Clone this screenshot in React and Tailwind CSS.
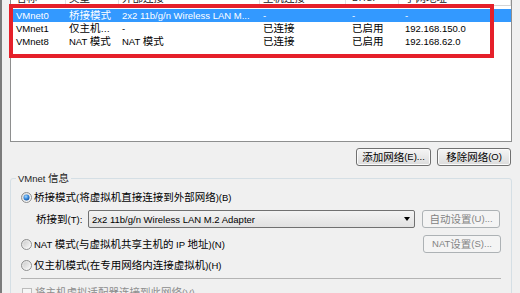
import React from 'react'

const CJK = /([\u2e80-\u9fff\uff00-\uffef]+)/

// CJK runs are drawn a little larger than the latin text, like the Windows dialog font
function Txt({ children }) {
  return String(children)
    .split(CJK)
    .map((p, i) => (i % 2 === 1 ? <span key={i} className="text-[10.5px]">{p}</span> : p))
}

const widths = ['w-[53px]', 'w-[53px]', 'w-[141px]', 'w-[86px]', 'w-[53px]', 'flex-1']
const pads = ['pl-[3px]', 'pl-[3px]', 'pl-[3px]', 'pl-[3px]', 'pl-[6px]', 'pl-[6px]']

const header = ['名称', '类型', '外部连接', '主机连接', 'DHCP', '子网地址']

const networks = [
  ['VMnet0', '桥接模式', '2x2 11b/g/n Wireless LAN M...', '-', '-', '-'],
  ['VMnet1', '仅主机…', '-', '已连接', '已启用', '192.168.150.0'],
  ['VMnet8', 'NAT 模式', 'NAT 模式', '已连接', '已启用', '192.168.62.0'],
]

function Radio({ checked }) {
  return (
    <svg width="11" height="11" viewBox="0 0 11 11" className="shrink-0">
      <defs>
        <linearGradient id="ring" x1="0" y1="0" x2="1" y2="1">
          <stop offset="0" stopColor="#d9d9d9" />
          <stop offset="1" stopColor="#ffffff" />
        </linearGradient>
        <radialGradient id="dot" cx="0.4" cy="0.35" r="0.7">
          <stop offset="0" stopColor="#a9dbff" />
          <stop offset="0.5" stopColor="#3f8fe0" />
          <stop offset="1" stopColor="#0d4f9e" />
        </radialGradient>
        <linearGradient id="off" x1="0" y1="0" x2="1" y2="1">
          <stop offset="0" stopColor="#cfcfcf" />
          <stop offset="1" stopColor="#f4f4f4" />
        </linearGradient>
      </defs>
      <circle cx="5.5" cy="5.5" r="5" fill="url(#ring)" stroke="#8e8f8f" strokeWidth="1" />
      {checked ? (
        <circle cx="5.5" cy="5.5" r="3" fill="url(#dot)" />
      ) : (
        <circle cx="5.5" cy="5.5" r="3.2" fill="url(#off)" />
      )}
    </svg>
  )
}

function Button({ children, disabled, className = '' }) {
  return (
    <div
      className={
        'flex items-center justify-center rounded-[3px] border leading-[16px] ' +
        (disabled
          ? 'border-[#adb2b5] bg-[#f4f4f4] text-[#838383] '
          : 'border-[#707070] bg-linear-to-b from-[#f5f5f5] to-[#dcdcdc] shadow-[inset_0_0_0_1px_#fbfbfb] ') +
        className
      }
    >
      <Txt>{children}</Txt>
    </div>
  )
}

export default function App() {
  return (
    <div className="relative h-[293px] w-[520px] overflow-hidden border-l-2 border-[#7b7b7b] bg-[#f0f0f0] font-['Liberation_Sans','Noto_Sans_CJK_SC',sans-serif] text-[9.5px] text-black">
      {/* network list */}
      <div className="ml-[8px] h-[142px] w-[502px] border-x border-b border-[#8e8f8f] bg-white">
        <div className="ml-[2px] flex h-[6px] overflow-hidden border-b border-[#d5d5d5] text-[#222]">
          {header.map((h, i) => (
            <div key={i} className={`${widths[i]} ${pads[i]} border-r border-[#e2e2e2]`}>
              <div className="-mt-[8px] leading-[12px] whitespace-nowrap">
                <Txt>{h}</Txt>
              </div>
            </div>
          ))}
        </div>
        <div className="mt-[3px] ml-[2px]">
          {networks.map((row, r) => (
            <div
              key={r}
              className={`flex h-[13px] items-center leading-[13px] whitespace-nowrap ${
                r === 0 ? 'bg-[#3399ff] text-white' : ''
              }`}
            >
              {row.map((c, i) => (
                <div key={i} className={`${widths[i]} ${pads[i]} overflow-hidden`}>
                  <Txt>{c}</Txt>
                </div>
              ))}
            </div>
          ))}
        </div>
      </div>

      {/* list buttons */}
      <div className="mt-[6px] ml-[8px] flex h-[18px] w-[502px] justify-end gap-[6px] pr-[1px]">
        <Button className="w-[75px]">添加网络(E)...</Button>
        <Button className="w-[74px]">移除网络(O)</Button>
      </div>

      {/* VMnet info group */}
      <fieldset className="mt-[6px] ml-[8px] w-[502px] rounded-[3px] border border-[#d5dfe5] pb-[20px]">
        <legend className="ml-[5px] px-[2px] leading-[12px] text-[#1e1e1e]">
          <Txt>VMnet 信息</Txt>
        </legend>

        <div className="mt-[6px] flex h-[13px] items-center gap-[2px] pl-[10px] leading-[13px]">
          <Radio checked />
          <span>
            <Txt>桥接模式(将虚拟机直接连接到外部网络)(B)</Txt>
          </span>
        </div>

        <div className="mt-[6px] flex h-[18px] items-center pl-[25px] leading-[13px]">
          <span className="w-[52px]">
            <Txt>桥接到(T):</Txt>
          </span>
          <div className="flex h-full w-[327px] items-center rounded-[2px] border border-[#707070] bg-linear-to-b from-[#f3f3f3] to-[#e1e1e1] pl-[3px] pr-[4px]">
            <span>2x2 11b/g/n Wireless LAN M.2 Adapter</span>
            <span className="ml-auto h-0 w-0 border-x-[3px] border-t-[4px] border-x-transparent border-t-black" />
          </div>
          <Button disabled className="ml-[7px] h-full w-[78px]">
            自动设置(U)...
          </Button>
        </div>

        <div className="mt-[7px] flex h-[18px] items-center pr-[10px] pl-[10px] leading-[13px]">
          <Radio />
          <span className="ml-[2px]">
            <Txt>NAT 模式(与虚拟机共享主机的 IP 地址)(N)</Txt>
          </span>
          <Button disabled className="ml-auto h-full w-[78px]">
            NAT 设置(S)...
          </Button>
        </div>

        <div className="mt-[6px] flex h-[13px] items-center gap-[2px] pl-[10px] leading-[13px]">
          <Radio />
          <span>
            <Txt>仅主机模式(在专用网络内连接虚拟机)(H)</Txt>
          </span>
        </div>

        <div className="mt-[6px] mr-[10px] ml-[10px] h-px bg-[#b4b4b4]" />

        <div className="mt-[7px] flex h-[13px] items-center gap-[3px] pl-[11px] leading-[13px] text-[#8d8d8d]">
          <span className="h-[10px] w-[10px] shrink-0 border border-[#bcbcbc] bg-[#f6f6f6]" />
          <span>
            <Txt>将主机虚拟适配器连接到此网络(V)</Txt>
          </span>
        </div>
      </fieldset>

      {/* annotation frame drawn over the list */}
      <div className="absolute top-[4px] left-[7px] h-[54px] w-[485px] border-4 border-[#e5202a]" />
    </div>
  )
}
